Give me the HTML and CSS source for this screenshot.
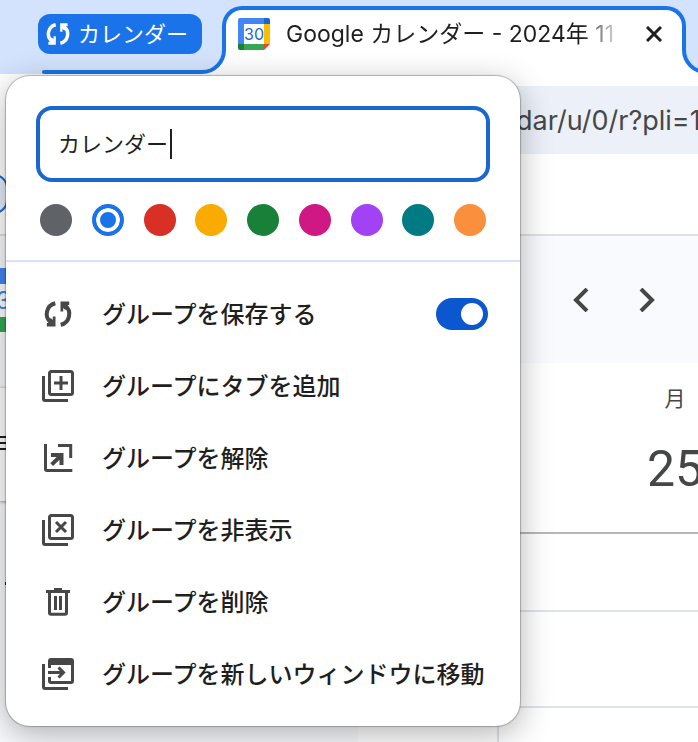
FILE: index.html
```
<!DOCTYPE html>
<html lang="ja">
<head>
  <meta charset="UTF-8">
  <meta name="viewport" content="width=device-width, initial-scale=1.0">
  <title>Google カレンダー</title>
  <link rel="stylesheet" href="styles.css">
</head>
<body>
  <div class="browser">
    <!-- Tab strip -->
    <div class="tab-strip">
      <div class="group">
        <button class="group-chip" type="button">
          <svg class="chip-icon" viewBox="2 2 28 28">
            <path class="line" d="M13.3 5.2A11 11 0 0 0 9 24.6M18.7 26.8A11 11 0 0 0 23 7.4"/>
            <path d="M13.5 18.500v10H4.800v-3.500h3l-2-2 3-3 2 2v-3.500zM18.500 13.500v-10h8.700v3.500h-3l2 2-3 3-2-2v3.500z"/>
          </svg>
          カレンダー
        </button>
        <div class="group-line"></div>
      </div>
      <div class="tab">
        <svg class="flare flare-left" viewBox="0 0 24 24">
          <path fill="#fff" d="M0 24v-2A22 22 0 0 0 22 0h2v24z"/>
          <path fill="none" stroke="#1a73e8" stroke-width="4" d="M0 22A22 22 0 0 0 22 0"/>
        </svg>
        <svg class="favicon" viewBox="0 0 32 32">
          <path fill="#fff" d="M6 6h20v20H6z"/>
          <path fill="#4285f4" d="M2 0h24v6H6v20H0V2a2 2 0 0 1 2-2z"/>
          <path fill="#1967d2" d="M26 0h4a2 2 0 0 1 2 2v4h-6z"/>
          <path fill="#fbbc04" d="M26 6h6v20h-6z"/>
          <path fill="#34a853" d="M6 26h20v6H6z"/>
          <path fill="#188038" d="M0 26h6v6H2a2 2 0 0 1-2-2z"/>
          <path fill="#ea4335" d="M26 26h6l-6 6z"/>
          <text x="16" y="22" text-anchor="middle">30</text>
        </svg>
        <span class="tab-title">Google カレンダー - 2024年 11</span>
        <button class="tab-close" type="button" aria-label="閉じる">
          <svg viewBox="0 0 16 16"><path d="M1 1l14 14M15 1L1 15"/></svg>
        </button>
        <svg class="flare flare-right" viewBox="0 0 24 24">
          <path fill="#fff" d="M24 24v-2A22 22 0 0 1 2 0H0v24z"/>
          <path fill="none" stroke="#1a73e8" stroke-width="4" d="M24 22A22 22 0 0 1 2 0"/>
        </svg>
      </div>
    </div>

    <!-- Address bar and bookmarks -->
    <div class="toolbar">
      <input class="address" type="text" value="dar/u/0/r?pli=1" aria-label="アドレス">
    </div>
    <div class="bookmarks"><span class="bookmark-pill"></span></div>

    <!-- Calendar page -->
    <div class="calendar">
      <aside class="sidebar">
        <div class="logo"><span>3</span></div>
        <div class="side-card"><i></i><i></i><i></i></div>
        <span class="side-dot"></span>
      </aside>
      <main class="main">
        <div class="nav">
          <button type="button" aria-label="前へ"><svg viewBox="0 0 24 24"><path d="M17 1L6 12l11 11"/></svg></button>
          <button type="button" aria-label="次へ"><svg viewBox="0 0 24 24"><path d="M7 1l11 11L7 23"/></svg></button>
        </div>
        <div class="day-head">
          <div class="day">
            <span class="weekday">月</span>
            <span class="date">25</span>
          </div>
        </div>
        <div class="hours">
          <div class="hour first"></div>
          <div class="hour"></div>
          <div class="hour last"></div>
        </div>
      </main>
    </div>

    <!-- Tab group editor -->
    <div class="bubble">
      <div class="bubble-top">
        <label class="name-field">
          <input type="text" value="カレンダー" aria-label="グループ名">
          <span class="caret"></span>
        </label>
        <div class="colors">
          <input type="radio" name="color" class="grey" aria-label="グレー">
          <input type="radio" name="color" class="blue" aria-label="青" checked>
          <input type="radio" name="color" class="red" aria-label="赤">
          <input type="radio" name="color" class="yellow" aria-label="黄">
          <input type="radio" name="color" class="green" aria-label="緑">
          <input type="radio" name="color" class="pink" aria-label="ピンク">
          <input type="radio" name="color" class="purple" aria-label="紫">
          <input type="radio" name="color" class="cyan" aria-label="シアン">
          <input type="radio" name="color" class="orange" aria-label="オレンジ">
        </div>
      </div>
      <div class="menu">
        <label class="item">
          <svg class="icon" viewBox="0 0 32 32">
            <path class="line thick" d="M13.3 5.2A11 11 0 0 0 9 24.6M18.7 26.8A11 11 0 0 0 23 7.4"/>
            <path d="M13.5 18.500v10H4.800v-3.500h3l-2-2 3-3 2 2v-3.500zM18.500 13.500v-10h8.700v3.500h-3l2 2-3 3-2-2v3.500z"/>
          </svg>
          <span>グループを保存する</span>
          <input class="toggle" type="checkbox" checked>
        </label>
        <button class="item" type="button">
          <svg class="icon" viewBox="0 0 32 32">
            <rect class="line" x="7.5" y="1.5" width="23" height="23" rx="2"/>
            <path class="line" d="M1.5 6v23a1.5 1.5 0 0 0 1.5 1.5h23M19 6v14M12 13h14"/>
          </svg>
          <span>グループにタブを追加</span>
        </button>
        <button class="item" type="button">
          <svg class="icon" viewBox="0 0 32 32">
            <path class="line" d="M3.5 2v25a1.5 1.5 0 0 0 1.500 1.500h25.300M16 3.500h12.700V16"/>
            <path class="line thick" d="M9 13h10.500V23M19.500 13L9.700 22.600"/>
          </svg>
          <span>グループを解除</span>
        </button>
        <button class="item" type="button">
          <svg class="icon" viewBox="0 0 32 32">
            <rect class="line" x="7.5" y="1.5" width="23" height="23" rx="2"/>
            <path class="line" d="M1.5 6v23a1.5 1.5 0 0 0 1.5 1.5h23M14 8l10 10M24 8L14 18"/>
          </svg>
          <span>グループを非表示</span>
        </button>
        <button class="item" type="button">
          <svg class="icon" viewBox="0 0 32 32">
            <path d="M12 2h8v2h8v3H4V4h8zM12 10h3v14h-3zM17 10h3v14h-3z"/>
            <path class="line" d="M7.500 6v20.700a1.500 1.500 0 0 0 1.500 1.500h14a1.500 1.500 0 0 0 1.500-1.500V6"/>
          </svg>
          <span>グループを削除</span>
        </button>
        <button class="item" type="button">
          <svg class="icon" viewBox="0 0 32 32">
            <path d="M9 0h20a3 3 0 0 1 3 3v4H6V3a3 3 0 0 1 3-3z"/>
            <path class="line" d="M7.500 6v4M7.500 19v4a1.500 1.500 0 0 0 1.500 1.500h20a1.500 1.500 0 0 0 1.500-1.500V6M1.500 6v23a1.500 1.500 0 0 0 1.500 1.500h23M6 14.500h15.500M16.500 9.500l5 5-5 5"/>
          </svg>
          <span>グループを新しいウィンドウに移動</span>
        </button>
      </div>
    </div>
  </div>
</body>
</html>
```
FILE: styles.css
```
* {
  box-sizing: border-box;
}
body {
  margin: 0;
  font-family: Inter, "Noto Sans CJK JP", sans-serif;
  color: #1f1f1f;
}
button {
  font: inherit;
  color: inherit;
  background: none;
  border: none;
  padding: 0;
}
.browser {
  position: relative;
  display: flex;
  flex-direction: column;
  min-height: 100vh;
  overflow: hidden;
  background: #fff;
}

/* Tab strip */
.tab-strip {
  display: flex;
  height: 74px;
  padding: 6px 12px 0 38px;
  background: #d3e3fd;
}
.group {
  display: flex;
  flex-direction: column;
  justify-content: space-between;
  flex: none;
  width: 164px;
  padding-top: 8px;
}
.group-chip {
  display: flex;
  align-items: center;
  gap: 8px;
  height: 40px;
  padding: 0 8px;
  border-radius: 12px;
  background: #1a73e8;
  color: #fff;
  font-size: 22px;
  line-height: 32px;
  white-space: nowrap;
}
.chip-icon {
  flex: none;
  width: 24px;
  height: 24px;
  fill: #fff;
}
.chip-icon .line {
  fill: none;
  stroke: #fff;
  stroke-width: 4;
}
.group-line {
  height: 4px;
  margin-left: 4px;
  border-radius: 2px 0 0 2px;
  background: #1a73e8;
}
.tab {
  position: relative;
  display: flex;
  align-items: flex-start;
  flex: 1;
  min-width: 0;
  margin-left: 20px;
  padding: 8px 20px 0 12px;
  border: 4px solid #1a73e8;
  border-width: 4px 4px 0;
  border-radius: 20px 20px 0 0;
  background: #fff;
}
.flare {
  position: absolute;
  bottom: 0;
  width: 24px;
  height: 24px;
}
.flare-left {
  left: -24px;
}
.flare-right {
  right: -24px;
}
.favicon {
  flex: none;
  width: 32px;
  height: 32px;
}
.favicon text {
  font-size: 16px;
  fill: #1967d2;
}
.tab-title {
  flex: 1;
  min-width: 0;
  margin: 0 20px 0 16px;
  overflow: hidden;
  white-space: nowrap;
  font-size: 23px;
  line-height: 32px;
  -webkit-mask-image: linear-gradient(to right, #000 296px, transparent 336px);
  mask-image: linear-gradient(to right, #000 296px, transparent 336px);
}
.tab-close {
  display: flex;
  padding: 8px 0;
}
.tab-close svg {
  width: 16px;
  height: 16px;
  fill: none;
  stroke: #1f1f1f;
  stroke-width: 3;
}

/* Toolbar */
.toolbar {
  padding: 12px 0 0 480px;
}
.address {
  display: block;
  width: 100%;
  height: 68px;
  padding: 0 0 0 36px;
  border: none;
  background: #ebf0f9;
  color: #474747;
  font-family: inherit;
  font-size: 27px;
}
.bookmarks {
  display: flex;
  align-items: center;
  height: 82px;
  border-bottom: 2px solid #dfe1e1;
}
.bookmark-pill {
  width: 28px;
  height: 40px;
  margin-left: -20px;
  border: 2px solid #1967d2;
  border-radius: 20px;
  background: #e5ebfa;
}

/* Calendar page */
.calendar {
  display: flex;
  flex: 1;
}
.sidebar {
  flex: none;
  width: 358px;
  padding-top: 32px;
  background: #f8fafd;
}
.logo {
  width: 16px;
  height: 64px;
  overflow: hidden;
  border-top: 16px solid #4285f4;
  border-bottom: 15px solid #34a853;
  background: #fff;
  color: #4285f4;
  font-size: 24px;
  line-height: 33px;
}
.logo span {
  margin-left: -4px;
}
.side-card {
  display: flex;
  flex-direction: column;
  gap: 4px;
  height: 114px;
  margin-top: 55px;
  padding-top: 48px;
  border-top: 1px solid #dadce0;
  background: #fff;
  box-shadow: 0 1px 3px rgba(0,0,0,0.4);
}
.side-card i {
  width: 8px;
  height: 2px;
  background: #1f1f1f;
}
.side-dot {
  display: block;
  width: 3px;
  height: 3px;
  margin: 81px 0 0 5px;
  background: #1f1f1f;
}
.main {
  display: flex;
  flex-direction: column;
  flex: 1;
  min-width: 0;
  overflow: hidden;
}
.nav {
  display: flex;
  align-items: center;
  gap: 40px;
  height: 127px;
  padding-left: 212px;
  background: #f8fafd;
}
.nav button {
  display: flex;
}
.nav svg {
  width: 24px;
  height: 24px;
  fill: none;
  stroke: #444746;
  stroke-width: 4;
}
.day-head {
  height: 169px;
  padding: 22px 0 0 140px;
  color: #444746;
}
.day {
  display: flex;
  flex-direction: column;
  align-items: center;
  gap: 24px;
  width: 354px;
}
.weekday {
  font-size: 21px;
  line-height: 28px;
}
.date {
  font-family: Roboto, sans-serif;
  font-size: 50px;
  line-height: 64px;
}
.hours {
  display: flex;
  flex-direction: column;
  flex: 1;
  margin-left: 139px;
  border-top: 2px solid #b7b7b7;
  border-left: 2px solid #dde3ea;
}
.hour {
  height: 96px;
  border-bottom: 2px solid #dde3ea;
}
.hour.first {
  height: 78px;
}
.hour.last {
  flex: 1;
  height: auto;
  border: none;
}

/* Tab group editor */
.bubble {
  position: absolute;
  top: 76px;
  left: 6px;
  width: 514px;
  border-radius: 24px;
  background: #fff;
  box-shadow: 0 0 1px 1px rgba(0,0,0,0.25), 0 8px 32px rgba(0,0,0,0.3);
}
.bubble-top {
  padding: 30px 30px 24px;
  border-bottom: 2px solid #d3e3fd;
}
.name-field {
  display: flex;
  align-items: center;
  height: 76px;
  padding-left: 18px;
  border: 4px solid #1967d2;
  border-radius: 16px;
}
.name-field input {
  field-sizing: content;
  padding: 0;
  border: none;
  outline: none;
  background: none;
  color: #1f1f1f;
  font-family: inherit;
  font-size: 22px;
  line-height: 32px;
}
.caret {
  width: 2px;
  height: 30px;
  margin-left: 2px;
  background: #1f1f1f;
}
.colors {
  display: flex;
  justify-content: space-between;
  padding: 22px 4px 0;
}
.colors input {
  appearance: none;
  width: 32px;
  height: 32px;
  margin: 0;
  border-radius: 50%;
  background: currentColor;
}
.colors input:checked {
  border: 4px solid currentColor;
  box-shadow: inset 0 0 0 4px #fff;
}
.grey { color: #5f6368; }
.blue { color: #1a73e8; }
.red { color: #d93025; }
.yellow { color: #f9ab00; }
.green { color: #188038; }
.pink { color: #d01884; }
.purple { color: #a142f4; }
.cyan { color: #007b83; }
.orange { color: #fa903e; }
.menu {
  display: flex;
  flex-direction: column;
  padding: 16px 0;
}
.item {
  display: flex;
  align-items: center;
  gap: 28px;
  height: 72px;
  padding: 0 32px 0 36px;
  font-size: 24px;
  font-weight: 500;
  line-height: 36px;
  white-space: nowrap;
}
.item span {
  padding-top: 2px;
}
.icon {
  flex: none;
  width: 32px;
  height: 32px;
  fill: #474747;
}
.icon .line {
  fill: none;
  stroke: #474747;
  stroke-width: 3;
}
.icon .thick {
  stroke-width: 4;
}
.toggle {
  appearance: none;
  display: flex;
  justify-content: flex-end;
  align-items: center;
  width: 52px;
  height: 32px;
  margin: 0 0 0 auto;
  padding: 0 5px;
  border-radius: 16px;
  background: #0b57d0;
}
.toggle::before {
  content: "";
  width: 22px;
  height: 22px;
  border-radius: 50%;
  background: #fff;
}
```
